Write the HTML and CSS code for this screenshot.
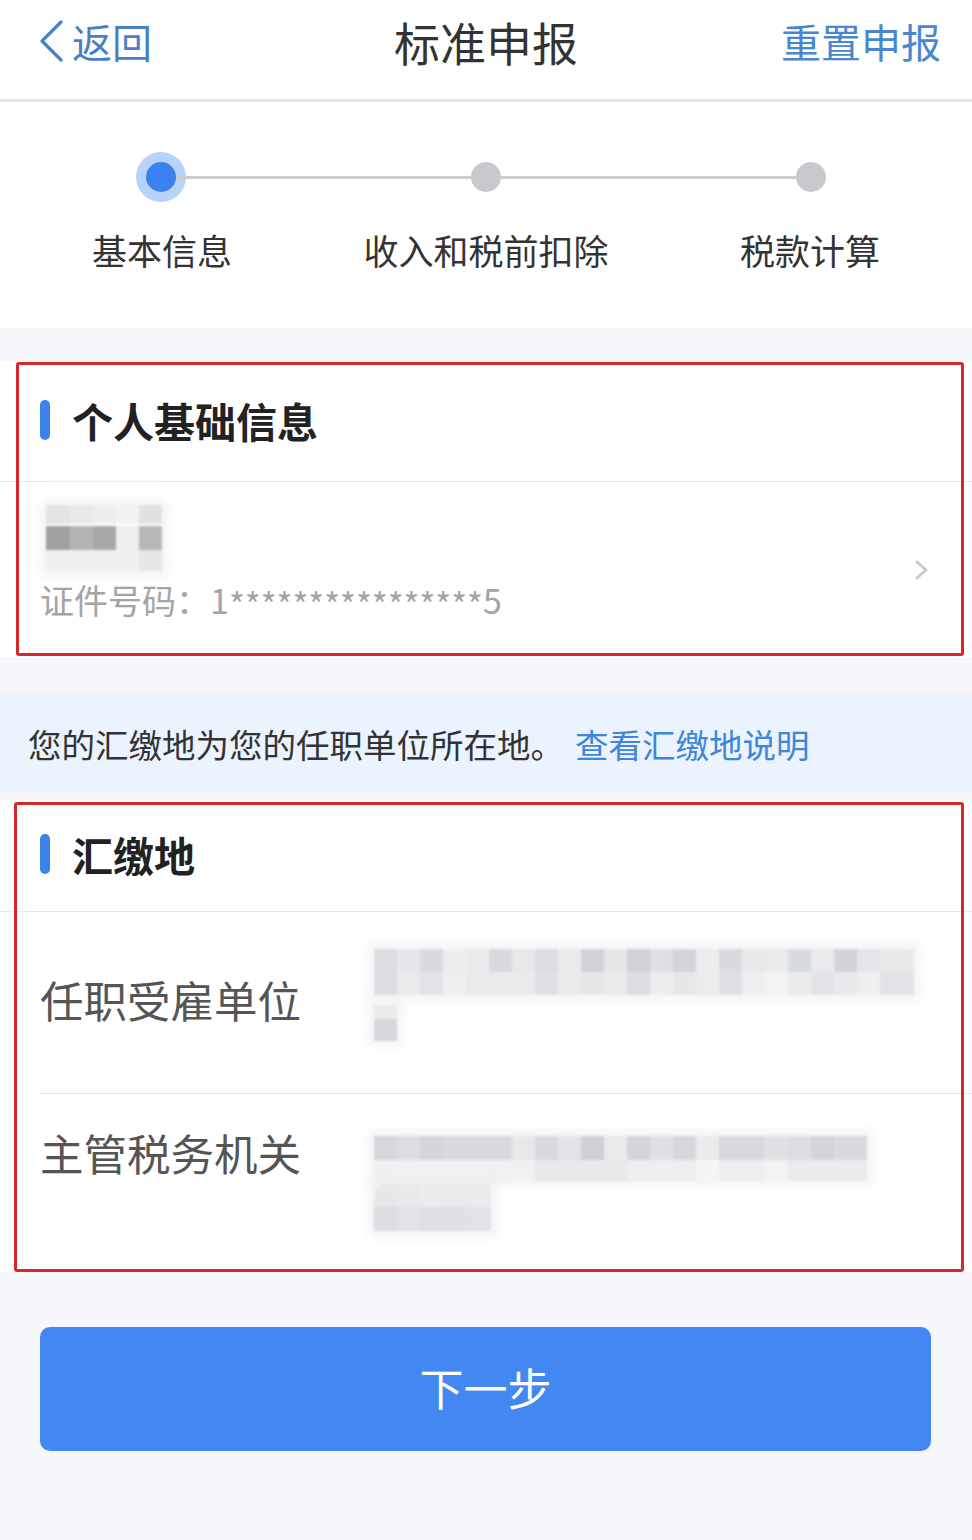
FILE: index.html
```html
<!DOCTYPE html>
<html lang="zh-CN">
<head>
    <meta charset="utf-8">
    <title>标准申报</title>
    <link rel="stylesheet" href="styles.css">
</head>
<body>
    <div class="topbar">
        <a class="back" href="#">
            <svg class="back-icon" viewBox="0 0 26 42" width="26" height="42"><path d="M23 2 L4 21 L23 40" fill="none" stroke="#4a7fd0" stroke-width="3.2" stroke-linecap="round" stroke-linejoin="round"/></svg>
            返回
        </a>
        <div class="title">标准申报</div>
        <a class="reset" href="#">重置申报</a>
    </div>

    <div class="steps">
        <div class="track">
            <span class="dot active"></span>
            <span class="bar"></span>
            <span class="dot"></span>
            <span class="bar"></span>
            <span class="dot"></span>
        </div>
        <div class="step-labels">
            <span>基本信息</span>
            <span>收入和税前扣除</span>
            <span>税款计算</span>
        </div>
    </div>

    <div class="card marked personal">
        <div class="card-head">个人基础信息</div>
        <div class="person">
            <div class="person-info">
                <div class="mosaic name-mask"></div>
                <div class="id-no">证件号码：1<span class="stars">****************</span>5</div>
            </div>
            <svg class="chevron" viewBox="0 0 16 22" width="16" height="22"><path d="M3 3 L12 11 L3 19" fill="none" stroke="#c7c9cd" stroke-width="3" stroke-linecap="round" stroke-linejoin="round"/></svg>
        </div>
    </div>

    <div class="notice">您的汇缴地为您的任职单位所在地。<a href="#">查看汇缴地说明</a></div>

    <div class="card marked place">
        <div class="card-head">汇缴地</div>
        <div class="field field-employer">
            <div class="field-label">任职受雇单位</div>
            <div class="field-value">
                <div class="mosaic employer-1"></div>
                <div class="mosaic employer-2"></div>
            </div>
        </div>
        <div class="field field-office">
            <div class="field-label">主管税务机关</div>
            <div class="field-value">
                <div class="mosaic office-1"></div>
                <div class="mosaic office-2"></div>
            </div>
        </div>
    </div>

    <div class="actions">
        <button class="next-btn" type="button">下一步</button>
    </div>
</body>
</html>
```

FILE: styles.css
```css
body {
    margin: 0;
    background: #f5f7fb;
    font-family: "Noto Sans CJK SC", "Noto Sans", sans-serif;
    color: #333;
}
a {
    text-decoration: none;
}

/* top bar */
.topbar {
    display: grid;
    grid-template-columns: 1fr auto 1fr;
    align-items: center;
    height: 82px;
    padding: 0 31px 17px 31px;
    background: #fff;
    border-bottom: 3px solid #e6e6e6;
}
.back {
    display: flex;
    align-items: center;
    margin-left: 7px;
    color: #4a7fc8;
    font-size: 40px;
    line-height: 48px;
}
.back-icon {
    margin-right: 8px;
}
.title {
    font-size: 46px;
    line-height: 52px;
    color: #333;
}
.reset {
    justify-self: end;
    color: #4a86d0;
    font-size: 40px;
    line-height: 48px;
}

/* steps */
.steps {
    background: #fff;
    padding: 60px 0 58px;
}
.track {
    display: flex;
    align-items: center;
    height: 30px;
    padding: 0 146px;
}
.dot {
    width: 30px;
    height: 30px;
    border-radius: 50%;
    background: #c7c9cd;
    flex: none;
}
.dot.active {
    background: #3b82f0;
    box-shadow: 0 0 0 10px #b7d3fa;
}
.bar {
    flex: 1;
    height: 3px;
    background: #cbcccf;
}
.step-labels {
    display: grid;
    grid-template-columns: repeat(3, 1fr);
    margin-top: 38px;
    text-align: center;
    font-size: 35px;
    line-height: 40px;
    color: #333;
}

/* cards */
.card {
    background: #fff;
}
.marked {
    position: relative;
}
.marked::after {
    content: "";
    position: absolute;
    top: 0;
    bottom: 1px;
    left: 16px;
    right: 8px;
    border: 3px solid #d6282b;
    border-radius: 3px;
    pointer-events: none;
}
.place.marked::after {
    top: 2px;
    bottom: 0;
    left: 14px;
}
.personal {
    margin-top: 34px;
}
.place {
    margin-top: 7px;
}
.card-head {
    display: flex;
    align-items: center;
    box-sizing: border-box;
    height: 120px;
    padding: 0 0 4px 40px;
    border-bottom: 1px solid #e9e9e9;
    font-size: 41px;
    font-weight: bold;
    color: #222;
}
.place .card-head {
    height: 112px;
}
.card-head::before {
    content: "";
    width: 10px;
    height: 40px;
    margin-right: 22px;
    border-radius: 5px;
    background: #3c82ef;
}

.person {
    display: flex;
    align-items: center;
    justify-content: space-between;
    box-sizing: border-box;
    height: 175px;
    padding: 0 42px 0 40px;
}
.person-info {
    margin-bottom: 10px;
}
.id-no {
    font-size: 34px;
    line-height: 40px;
    color: #a4a4a4;
}
.stars {
    vertical-align: -4px;
}

/* pixelated masks over personal data */
.mosaic {
    filter: blur(0.8px);
    box-shadow: 0 0 10px 6px rgba(236, 237, 240, 0.6);
}
.name-mask {
    width: 116px;
    height: 66px;
    margin: 0 0 9px 6px;
    background:
        linear-gradient(90deg, #e4e4e4 0 24px, #e8e8e8 24px 47px, #eeeeee 47px 70px, #f2f2f2 70px 93px, #e2e2e2 93px) top / 100% 19px no-repeat,
        linear-gradient(90deg, #a0a0a0 0 24px, #b4b4b4 24px 47px, #a8a8a8 47px 70px, #efefef 70px 93px, #b8b8b8 93px) center / 100% 24px no-repeat,
        linear-gradient(90deg, #f0f0f0 0 93px, #e6e6e6 93px) bottom / 100% 23px no-repeat;
}

.notice {
    display: flex;
    align-items: center;
    height: 100px;
    margin-top: 36px;
    padding-left: 28px;
    background: #eaf3fe;
    font-size: 33.5px;
    color: #333;
}
.notice a {
    margin-left: 11px;
    color: #3d86d8;
}

.field {
    display: flex;
    align-items: center;
    box-sizing: border-box;
    margin-left: 40px;
}
.field-employer {
    height: 181px;
}
.field-office {
    height: 179px;
    border-top: 1px solid #e6e6e6;
}
.field-label {
    width: 334px;
    font-size: 43.5px;
    line-height: 50px;
    color: #555;
}
.field-employer .field-label {
    margin-bottom: 6px;
}
.field-office .field-label {
    margin-bottom: 60px;
}
.field-employer .field-value {
    margin-bottom: 16px;
}
.employer-1 {
    width: 540px;
    height: 46px;
    margin-bottom: 10px;
    background:
        linear-gradient(90deg, #dcdde0 0 23px, #e6e7ea 23px 46px, #dadbde 46px 69px, #ecedef 69px 92px, #e9eaec 92px 115px, #d9dadd 115px 138px, #e7e8ea 138px 161px, #dcdde0 161px 184px, #e9eaec 184px 207px, #d2d3d7 207px 230px, #e6e7e9 230px 253px, #d0d2d5 253px 276px, #dfe0e3 276px 299px, #d4d5d9 299px 322px, #ebecee 322px 345px, #d9dbde 345px 368px, #e8e9eb 368px 391px, #e9eaec 391px 414px, #d9dcdf 414px 437px, #e9eaec 437px 460px, #d3d4d8 460px 483px, #e4e5e8 483px 506px, #e8e9eb 506px) top / 100% 23px no-repeat,
        linear-gradient(90deg, #dcdde0 0 23px, #e9eaec 23px 46px, #e3e4e7 46px 69px, #eeeff0 69px 92px, #e9eaec 92px 161px, #dfe0e3 161px 184px, #e9eaec 184px 207px, #e6e7e9 207px 230px, #e9eaec 230px 253px, #dcdde0 253px 276px, #ecedee 276px 299px, #e6e7e9 299px 322px, #ebecee 322px 345px, #e0e1e4 345px 368px, #eeeff0 368px 391px, #f2f3f4 391px 414px, #eaebed 414px 437px, #e3e4e7 437px 460px, #e8e9eb 460px 483px, #eeeff0 483px 506px, #e3e4e7 506px) bottom / 100% 23px no-repeat;
}
.employer-2 {
    width: 23px;
    height: 36px;
    background: linear-gradient(#e9eaec 0 14px, #d6d7db 14px);
}
.office-1 {
    width: 493px;
    height: 45px;
    margin-bottom: 3px;
    background:
        linear-gradient(90deg, #d6d7db 0 23px, #dcdde0 23px 46px, #d5d6da 46px 69px, #d9dadd 69px 138px, #e7e8ea 138px 161px, #d9dadd 161px 184px, #e3e4e7 184px 207px, #cfd0d4 207px 230px, #e9eaec 230px 253px, #d3d5d8 253px 276px, #dfe0e3 276px 299px, #d6d7db 299px 322px, #eaebed 322px 345px, #d9dadd 345px 391px, #e0e1e4 391px 414px, #dcdde0 414px 437px, #d4d5d9 437px 460px, #d9dadd 460px) top / 100% 24px no-repeat,
        linear-gradient(90deg, #f0f1f2 0 161px, #e8e9eb 161px 253px, #eeeff0 253px 322px, #f5f5f6 322px 345px, #eeeff0 345px 391px, #f3f3f4 391px 414px, #eaebed 414px) bottom / 100% 21px no-repeat;
}
.office-2 {
    width: 117px;
    height: 47px;
    border-top-left-radius: 10px;
    background:
        linear-gradient(90deg, #e6e7e9 0 23px, #e8e9eb 23px 46px, #eaebed 46px 70px, #e9eaec 70px 93px, #eaebed 93px) top / 100% 23px no-repeat,
        linear-gradient(90deg, #dcdde0 0 23px, #e2e3e6 23px 46px, #dfe0e3 46px 70px, #e0e1e4 70px 93px, #e2e3e6 93px) bottom / 100% 24px no-repeat;
}

/* bottom button */
.actions {
    padding: 55px 41px 0 40px;
}
.next-btn {
    display: block;
    width: 100%;
    height: 124px;
    padding-bottom: 5px;
    border: none;
    border-radius: 10px;
    background: #4388f2;
    color: #fff;
    font-family: inherit;
    font-size: 44px;
    cursor: pointer;
}
```
